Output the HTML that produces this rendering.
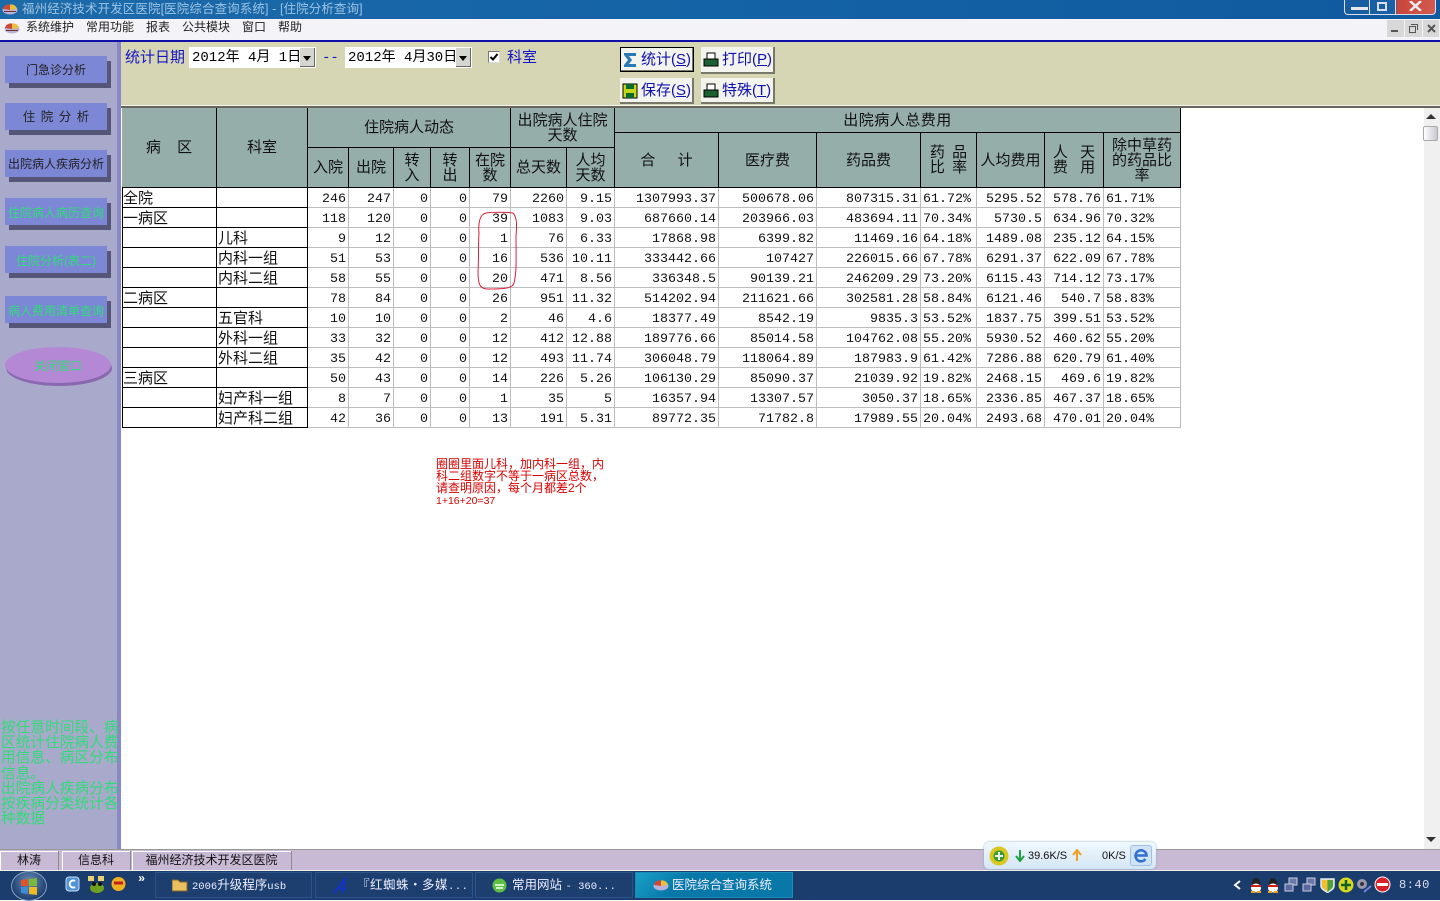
<!DOCTYPE html>
<html lang="zh"><head><meta charset="utf-8"><title>医院综合查询系统</title>
<style>
*{box-sizing:border-box}
html,body{margin:0;padding:0}
body{width:1440px;height:900px;position:relative;overflow:hidden;background:#fff;font-family:"Liberation Mono","WenQuanYi Zen Hei","Noto Sans CJK SC",monospace;font-size:14px;color:#000}
.a{position:absolute;white-space:nowrap}
.zh{font-family:"Liberation Sans","WenQuanYi Zen Hei","Noto Sans CJK SC",sans-serif}
.sb{position:absolute;left:5px;width:102px;height:27px;background:#7c88d6;box-shadow:4px 5px 0 #555578;text-align:center;line-height:29px;font-size:12px;color:#222;font-family:"Liberation Sans","WenQuanYi Zen Hei",sans-serif;white-space:nowrap}
.sb.g{color:#2fdc78;line-height:30px}
.h{position:absolute;background:#95aeaa;text-align:center;font-size:15px;line-height:15px;color:#111;display:flex;align-items:center;justify-content:center;font-family:"Liberation Sans","WenQuanYi Zen Hei",sans-serif;border-right:1px solid #000;border-bottom:1px solid #000}
table{position:absolute;left:122px;top:188px;border-collapse:separate;border-spacing:0;table-layout:fixed;width:1059px}
td{height:20px;padding:4px 2px 0 0;vertical-align:top;text-align:right;font-size:13.33px;line-height:15px;border-right:1px solid #bdbdbd;border-bottom:1px solid #bdbdbd;overflow:hidden;white-space:nowrap;color:#111}
td.k{text-align:left;padding:2px 0 0 1px;line-height:17px;font-size:15px;font-family:"Liberation Sans","WenQuanYi Zen Hei",sans-serif;border-color:#000}
td.p{text-align:left;padding:4px 0 0 2px}
.btn{position:absolute;width:74px;height:27px;background:#f4f4ee;border-right:2px solid #77776a;border-bottom:2px solid #77776a;color:#1010b0;font-size:15px;line-height:25px;white-space:nowrap;font-family:"Liberation Sans","WenQuanYi Zen Hei",sans-serif}
.btn span{position:absolute;left:21px;top:0}
.btn svg{position:absolute;left:2px;top:4px}
.tb{position:absolute;top:872px;height:26px;background:#1c3f70;border:1px solid #2d5488;color:#eef;font-size:12.5px;line-height:25px;white-space:nowrap;font-family:"Liberation Sans","WenQuanYi Zen Hei",sans-serif}
.tb i{font-style:normal;font-family:"Liberation Mono",monospace;font-size:10.5px}
.st{position:absolute;top:851px;height:19px;background:#c8b9d4;border-right:1px solid #8a8a8a;box-shadow:inset 1px 1px 0 #fff;text-align:center;font-size:12px;line-height:18px;color:#111;font-family:"Liberation Sans","WenQuanYi Zen Hei",sans-serif;white-space:nowrap}
</style></head><body>

<!-- title bar -->
<div class="a" style="left:0;top:0;width:1440px;height:19px;background:linear-gradient(90deg,#1c6aa8,#1463a6 50%,#105a9e);"></div>
<svg class="a" style="left:2px;top:2px" width="16" height="14" viewBox="0 0 16 14"><ellipse cx="8" cy="8" rx="7.5" ry="4.5" fill="#b9b2d8"/><path d="M8 8V2.5A6 5 0 0 1 15 7Z" fill="#e8c040"/><path d="M8 8V2.5A6 5 0 0 0 1 7Z" fill="#d04838"/><path d="M2 9.500h12" stroke="#7a3030"/></svg>
<div class="a zh" style="left:22px;top:1px;font-size:12.500px;line-height:17px;color:#9cc4e4;letter-spacing:.1px">福州经济技术开发区医院[医院综合查询系统] - [住院分析查询]</div>
<div class="a" style="left:1344px;top:0;width:92px;height:15px;border:1px solid #dde;border-top:0;border-radius:0 0 4px 4px;background:linear-gradient(90deg,#175da0 0,#1a60a5 51px,#c9463c 52px,#d25a4e 100%)"></div>
<div class="a" style="left:1369px;top:0;width:1px;height:15px;background:#dde"></div><div class="a" style="left:1395px;top:0;width:1px;height:15px;background:#dde"></div>
<div class="a" style="left:1351px;top:7px;width:17px;height:3px;background:#e8e8e8"></div>
<div class="a" style="left:1377px;top:2px;width:10px;height:9px;border:2px solid #dde"></div>
<svg class="a" style="left:1409px;top:1px" width="13" height="10"><path d="M1 0L12 10M12 0L1 10" stroke="#eee" stroke-width="2.500"/></svg>

<!-- menu bar -->
<div class="a" style="left:0;top:19px;width:1440px;height:21px;background:#f4f4f8"></div>
<svg class="a" style="left:4px;top:21px" width="16" height="14" viewBox="0 0 16 14"><ellipse cx="8" cy="8" rx="7.500" ry="4.500" fill="#b9b2d8"/><path d="M8 8V2.500A6 5 0 0 1 15 7Z" fill="#e8c040"/><path d="M8 8V2.500A6 5 0 0 0 1 7Z" fill="#d04838"/><path d="M2 9.500h12" stroke="#7a3030"/></svg>
<div class="a zh" style="left:26px;top:19px;font-size:12px;line-height:17px;color:#222;word-spacing:0">系统维护</div>
<div class="a zh" style="left:86px;top:19px;font-size:12px;line-height:17px;color:#222">常用功能</div>
<div class="a zh" style="left:146px;top:19px;font-size:12px;line-height:17px;color:#222">报表</div>
<div class="a zh" style="left:182px;top:19px;font-size:12px;line-height:17px;color:#222">公共模块</div>
<div class="a zh" style="left:242px;top:19px;font-size:12px;line-height:17px;color:#222">窗口</div>
<div class="a zh" style="left:278px;top:19px;font-size:12px;line-height:17px;color:#222">帮助</div>
<div class="a" style="left:1387px;top:20px;width:52px;height:17px;background:#d8d8d8"></div>
<div class="a" style="left:1387px;top:20px;width:18px;height:17px;border-right:1px solid #f4f4f4"></div>
<div class="a" style="left:1405px;top:20px;width:18px;height:17px;border-right:1px solid #f4f4f4"></div>
<div class="a" style="left:1391px;top:30px;width:7px;height:2px;background:#555"></div>
<div class="a" style="left:1409px;top:26px;width:7px;height:7px;border:1px solid #555;background:#d8d8d8"></div>
<div class="a" style="left:1411px;top:24px;width:7px;height:6px;border:1px solid #555;border-left:0;border-bottom:0"></div>
<svg class="a" style="left:1427px;top:24px" width="9" height="9"><path d="M1 1L8 8M8 1L1 8" stroke="#555" stroke-width="2"/></svg>
<div class="a" style="left:0;top:40px;width:1440px;height:2px;background:#1010a8"></div>

<!-- sidebar -->
<div class="a" style="left:0;top:42px;width:117px;height:809px;background:#a9a9cb"></div>
<div class="a" style="left:117px;top:42px;width:4px;height:809px;background:#8888c8"></div>
<div class="sb" style="top:56px">门急诊分析</div>
<div class="sb" style="top:103px;word-spacing:2px;font-size:12.500px">住 院 分 析</div>
<div class="sb" style="top:150px">出院病人疾病分析</div>
<div class="sb g" style="top:198px">住院病人病历查询</div>
<div class="sb g" style="top:246px">住院分析(表二)</div>
<div class="sb g" style="top:296px">病人费用清单查询</div>
<div class="a" style="left:6px;top:350px;width:106px;height:36px;border-radius:50%;background:#8a68b0"></div>
<div class="a zh" style="left:5px;top:347px;width:106px;height:36px;border-radius:50%;background:#b488d4;text-align:center;line-height:38px;font-size:12px;color:#2fdc78">关闭窗口</div>
<div class="a zh" style="left:1px;top:721px;width:118px;white-space:normal;font-size:14.700px;line-height:15.200px;color:#2fdc78">按任意时间段、病区统计住院病人费用信息、病区分布信息。<br>出院病人疾病分布按疾病分类统计各种数据</div>

<!-- toolbar -->
<div class="a" style="left:121px;top:42px;width:1319px;height:63px;background:#d6d6b5"></div>
<div class="a" style="left:121px;top:105px;width:1319px;height:1px;background:#f4f4ee"></div>
<div class="a" style="left:121px;top:106px;width:1319px;height:2px;background:#66665e"></div>
<div class="a zh" style="left:125px;top:49px;font-size:15px;line-height:18px;color:#1414c8">统计日期</div>
<div class="a" style="left:189px;top:47px;width:127px;height:21px;background:#fff;font-size:14px;line-height:23px;padding-left:3px">2012年 4月 1日</div>
<div class="a" style="left:300px;top:48px;width:15px;height:19px;background:#d6d6d0;border-right:1px solid #666;border-bottom:1px solid #666"></div>
<div class="a" style="left:303px;top:56px;border:4px solid transparent;border-top:5px solid #000;border-bottom:0"></div>
<div class="a" style="left:322px;top:50px;font-size:14px;line-height:17px;color:#1414c8">--</div>
<div class="a" style="left:345px;top:47px;width:127px;height:21px;background:#fff;font-size:14px;line-height:23px;padding-left:3px">2012年 4月30日</div>
<div class="a" style="left:456px;top:48px;width:15px;height:19px;background:#d6d6d0;border-right:1px solid #666;border-bottom:1px solid #666"></div>
<div class="a" style="left:459px;top:56px;border:4px solid transparent;border-top:5px solid #000;border-bottom:0"></div>
<div class="a" style="left:488px;top:51px;width:12px;height:12px;background:#fff;border:1px solid #777;border-right-color:#ddd;border-bottom-color:#ddd"></div>
<svg class="a" style="left:489px;top:52px" width="10" height="10"><path d="M1.500 5L4 7.500L8.500 2" fill="none" stroke="#000" stroke-width="2"/></svg>
<div class="a zh" style="left:507px;top:49px;font-size:15px;line-height:18px;color:#1414c8">科室</div>

<div class="btn" style="left:620px;top:47px;outline:1px solid #000;outline-offset:-1px;width:74px;height:25px"><svg width="16" height="18"><path d="M2 2H14V5H7L10 9L7 13H14V16H2V14L6 9L2 4Z" fill="#2a7ab8"/></svg><span>统计(<u>S</u>)</span></div>
<div class="btn" style="left:701px;top:47px"><svg width="16" height="18"><rect x="4" y="2" width="8" height="6" fill="#fff" stroke="#000"/><rect x="1" y="8" width="14" height="7" fill="#1a6030" stroke="#000"/></svg><span>打印(<u>P</u>)</span></div>
<div class="btn" style="left:620px;top:78px;height:26px"><svg width="16" height="18"><rect x="1" y="2" width="14" height="14" fill="#c8d818" stroke="#000"/><rect x="4" y="2" width="8" height="5" fill="#0a6a30"/><rect x="4" y="11" width="8" height="5" fill="#0a6a30"/></svg><span>保存(<u>S</u>)</span></div>
<div class="btn" style="left:701px;top:78px;height:26px"><svg width="16" height="18"><rect x="4" y="2" width="8" height="6" fill="#fff" stroke="#000"/><rect x="1" y="8" width="14" height="7" fill="#1a6030" stroke="#000"/></svg><span>特殊(<u>T</u>)</span></div>

<!-- table header -->
<div class="a" style="left:122px;top:108px;width:1059px;height:80px;background:#000"></div>
<div class="h" style="left:122px;top:108px;width:95px;height:80px;word-spacing:12px">病 区</div>
<div class="h" style="left:217px;top:108px;width:91px;height:80px">科室</div>
<div class="h" style="left:308px;top:108px;width:203px;height:40px">住院病人动态</div>
<div class="h" style="left:511px;top:108px;width:104px;height:40px">出院病人住院<br>天数</div>
<div class="h" style="left:615px;top:108px;width:566px;height:25px;letter-spacing:.5px">出院病人总费用</div>
<div class="h" style="left:308px;top:148px;width:41px;height:40px">入院</div>
<div class="h" style="left:349px;top:148px;width:45px;height:40px">出院</div>
<div class="h" style="left:394px;top:148px;width:37px;height:40px">转<br>入</div>
<div class="h" style="left:431px;top:148px;width:39px;height:40px">转<br>出</div>
<div class="h" style="left:470px;top:148px;width:41px;height:40px">在院<br>数</div>
<div class="h" style="left:511px;top:148px;width:56px;height:40px">总天数</div>
<div class="h" style="left:567px;top:148px;width:48px;height:40px">人均<br>天数</div>
<div class="h" style="left:615px;top:133px;width:104px;height:55px;word-spacing:18px">合 计</div>
<div class="h" style="left:719px;top:133px;width:98px;height:55px">医疗费</div>
<div class="h" style="left:817px;top:133px;width:104px;height:55px">药品费</div>
<div class="h" style="left:921px;top:133px;width:56px;height:55px;word-spacing:3px">药 品<br>比 率</div>
<div class="h" style="left:977px;top:133px;width:68px;height:55px">人均费用</div>
<div class="h" style="left:1045px;top:133px;width:59px;height:55px;word-spacing:8px">人 天<br>费 用</div>
<div class="h" style="left:1104px;top:133px;width:77px;height:55px">除中草药<br>的药品比<br>率</div>

<table><colgroup><col style="width:95px"><col style="width:91px"><col style="width:41px"><col style="width:45px"><col style="width:37px"><col style="width:39px"><col style="width:41px"><col style="width:56px"><col style="width:48px"><col style="width:104px"><col style="width:98px"><col style="width:104px"><col style="width:56px"><col style="width:68px"><col style="width:59px"><col style="width:77px"></colgroup>
<tr><td class="k">全院</td><td class="k"></td><td>246</td><td>247</td><td>0</td><td>0</td><td>79</td><td>2260</td><td>9.15</td><td>1307993.37</td><td>500678.06</td><td>807315.31</td><td class="p">61.72%</td><td>5295.52</td><td>578.76</td><td class="p">61.71%</td></tr>
<tr><td class="k">一病区</td><td class="k"></td><td>118</td><td>120</td><td>0</td><td>0</td><td>39</td><td>1083</td><td>9.03</td><td>687660.14</td><td>203966.03</td><td>483694.11</td><td class="p">70.34%</td><td>5730.5</td><td>634.96</td><td class="p">70.32%</td></tr>
<tr><td class="k"></td><td class="k">儿科</td><td>9</td><td>12</td><td>0</td><td>0</td><td>1</td><td>76</td><td>6.33</td><td>17868.98</td><td>6399.82</td><td>11469.16</td><td class="p">64.18%</td><td>1489.08</td><td>235.12</td><td class="p">64.15%</td></tr>
<tr><td class="k"></td><td class="k">内科一组</td><td>51</td><td>53</td><td>0</td><td>0</td><td>16</td><td>536</td><td>10.11</td><td>333442.66</td><td>107427</td><td>226015.66</td><td class="p">67.78%</td><td>6291.37</td><td>622.09</td><td class="p">67.78%</td></tr>
<tr><td class="k"></td><td class="k">内科二组</td><td>58</td><td>55</td><td>0</td><td>0</td><td>20</td><td>471</td><td>8.56</td><td>336348.5</td><td>90139.21</td><td>246209.29</td><td class="p">73.20%</td><td>6115.43</td><td>714.12</td><td class="p">73.17%</td></tr>
<tr><td class="k">二病区</td><td class="k"></td><td>78</td><td>84</td><td>0</td><td>0</td><td>26</td><td>951</td><td>11.32</td><td>514202.94</td><td>211621.66</td><td>302581.28</td><td class="p">58.84%</td><td>6121.46</td><td>540.7</td><td class="p">58.83%</td></tr>
<tr><td class="k"></td><td class="k">五官科</td><td>10</td><td>10</td><td>0</td><td>0</td><td>2</td><td>46</td><td>4.6</td><td>18377.49</td><td>8542.19</td><td>9835.3</td><td class="p">53.52%</td><td>1837.75</td><td>399.51</td><td class="p">53.52%</td></tr>
<tr><td class="k"></td><td class="k">外科一组</td><td>33</td><td>32</td><td>0</td><td>0</td><td>12</td><td>412</td><td>12.88</td><td>189776.66</td><td>85014.58</td><td>104762.08</td><td class="p">55.20%</td><td>5930.52</td><td>460.62</td><td class="p">55.20%</td></tr>
<tr><td class="k"></td><td class="k">外科二组</td><td>35</td><td>42</td><td>0</td><td>0</td><td>12</td><td>493</td><td>11.74</td><td>306048.79</td><td>118064.89</td><td>187983.9</td><td class="p">61.42%</td><td>7286.88</td><td>620.79</td><td class="p">61.40%</td></tr>
<tr><td class="k">三病区</td><td class="k"></td><td>50</td><td>43</td><td>0</td><td>0</td><td>14</td><td>226</td><td>5.26</td><td>106130.29</td><td>85090.37</td><td>21039.92</td><td class="p">19.82%</td><td>2468.15</td><td>469.6</td><td class="p">19.82%</td></tr>
<tr><td class="k"></td><td class="k">妇产科一组</td><td>8</td><td>7</td><td>0</td><td>0</td><td>1</td><td>35</td><td>5</td><td>16357.94</td><td>13307.57</td><td>3050.37</td><td class="p">18.65%</td><td>2336.85</td><td>467.37</td><td class="p">18.65%</td></tr>
<tr><td class="k"></td><td class="k">妇产科二组</td><td>42</td><td>36</td><td>0</td><td>0</td><td>13</td><td>191</td><td>5.31</td><td>89772.35</td><td>71782.8</td><td>17989.55</td><td class="p">20.04%</td><td>2493.68</td><td>470.01</td><td class="p">20.04%</td></tr>
</table>
<div class="a" style="left:122px;top:188px;width:1px;height:240px;background:#000"></div>

<!-- red circle -->
<svg class="a" style="left:470px;top:205px" width="60" height="95"><path d="M9 28C8 18 10 9 16 8C24 7 36 7 43 8C47 12 47 20 46 32C46 50 47 66 44 78C43 84 30 84 18 84C9 84 8 78 8 66C9 52 8 40 9 28Z" fill="none" stroke="#d8203c" stroke-width="1"/></svg>

<!-- note -->
<div class="a zh" style="left:436px;top:458px;font-size:12px;line-height:12px;color:#d80000;white-space:normal;width:172px">圈圈里面儿科，加内科一组，内<br>科二组数字不等于一病区总数，<br>请查明原因，每个月都差2个<br><span style="font-size:10.500px">1+16+20=37</span></div>

<!-- scrollbar -->
<div class="a" style="left:1424px;top:108px;width:16px;height:742px;background:#f0f0f0"></div>
<div class="a" style="left:1426px;top:114px;border:5px solid transparent;border-bottom:5px solid #333;border-top:0"></div>
<div class="a" style="left:1423px;top:126px;width:15px;height:15px;background:linear-gradient(90deg,#fff,#c8c8d0);border:1px solid #aaa;border-radius:2px"></div>
<div class="a" style="left:1426px;top:837px;border:5px solid transparent;border-top:5px solid #333;border-bottom:0"></div>

<!-- status bar -->
<div class="a" style="left:0;top:849px;width:1440px;height:1px;background:#999"></div>
<div class="a" style="left:0;top:850px;width:1440px;height:20px;background:#c8b9d4"></div>
<div class="st" style="left:0;width:59px">林涛</div>
<div class="st" style="left:62px;width:69px">信息科</div>
<div class="st" style="left:132px;width:160px">福州经济技术开发区医院</div>
<div class="a" style="left:0;top:870px;width:1440px;height:1px;background:#f0f0f0"></div>

<!-- taskbar -->
<div class="a" style="left:0;top:871px;width:1440px;height:29px;background:#1a3d6e"></div>
<div class="a" style="left:11px;top:871px;width:36px;height:30px;border-radius:50%;background:radial-gradient(circle at 50% 35%,#6a8cb8,#1c3e6e 75%);border:1px solid #87a0c0"></div>
<svg class="a" style="left:20px;top:878px" width="18" height="17" viewBox="0 0 18 17"><path d="M1 2L8 1V8H1Z" fill="#e2552a"/><path d="M9 1L17 0V8H9Z" fill="#7cb83a"/><path d="M1 9H8V16L1 15Z" fill="#3f8cd8"/><path d="M9 9H17V17L9 16Z" fill="#eebb22"/></svg>
<svg class="a" style="left:65px;top:876px" width="15" height="16"><rect x="1" y="1" width="13" height="14" rx="3" fill="#4f93d8" stroke="#cde"/><path d="M10 5A3.500 3.500 0 1 0 10 11" fill="none" stroke="#fff" stroke-width="2"/></svg>
<svg class="a" style="left:88px;top:876px" width="18" height="18"><rect x="0" y="0" width="6" height="5" fill="#ead070"/><rect x="10" y="0" width="6" height="5" fill="#ead070"/><ellipse cx="9" cy="12" rx="7" ry="5" fill="#70a020"/><circle cx="6" cy="8" r="2" fill="#111"/><circle cx="12" cy="8" r="2" fill="#111"/></svg>
<svg class="a" style="left:111px;top:876px" width="15" height="16"><circle cx="7.500" cy="8" r="7" fill="#f0b020"/><path d="M3 7H12" stroke="#c02020" stroke-width="3"/></svg>
<div class="a" style="left:138px;top:872px;color:#fff;font-size:12px;line-height:14px;font-weight:bold">»</div>
<div class="tb" style="left:155px;width:157px"><svg class="a" style="left:16px;top:5px" width="16" height="14"><path d="M0 2H6L8 4H15V13H0Z" fill="#e8c060" stroke="#8a6820"/></svg><span class="a" style="left:36px;top:0"><i>2006</i>升级程序<i>usb</i></span></div>
<div class="tb" style="left:315px;width:158px"><svg class="a" style="left:16px;top:3px" width="16" height="19"><path d="M2 17L13 3L11 17M6 12L14 13" fill="none" stroke="#1434c8" stroke-width="2"/></svg><span class="a" style="left:41px;top:0;letter-spacing:.5px">『红蜘蛛・多媒<i>...</i></span></div>
<div class="tb" style="left:475px;width:158px"><svg class="a" style="left:16px;top:5px" width="15" height="15"><circle cx="7.500" cy="7.500" r="7" fill="#5cc040"/><path d="M3 7H12M4 10H11" stroke="#fff" stroke-width="1.500"/></svg><span class="a" style="left:36px;top:0">常用网站 <i>- 360...</i></span></div>
<div class="tb" style="left:635px;width:158px;background:linear-gradient(135deg,#1aa0c8,#0878a8 30%,#0878a8);border-color:#1a8ab8"><svg class="a" style="left:17px;top:5px" width="16" height="14" viewBox="0 0 16 14"><ellipse cx="8" cy="8" rx="7.500" ry="4.500" fill="#b9b2d8"/><path d="M8 8V2.500A6 5 0 0 1 15 7Z" fill="#e8c040"/><path d="M8 8V2.500A6 5 0 0 0 1 7Z" fill="#d04838"/></svg><span class="a" style="left:36px;top:0">医院综合查询系统</span></div>

<!-- 360 float -->
<div class="a" style="left:984px;top:842px;width:172px;height:27px;border-radius:5px;background:linear-gradient(#f0f8ff,#d4e6f4);box-shadow:0 0 2px #8ab"></div>
<svg class="a" style="left:989px;top:846px" width="20" height="20"><circle cx="10" cy="10" r="9.500" fill="#d8c820"/><circle cx="10" cy="10" r="5.500" fill="#3a9a30"/><path d="M10 6V14M6 10H14" stroke="#eee" stroke-width="2"/></svg>
<svg class="a" style="left:1014px;top:849px" width="12" height="13"><path d="M6 1V11M2 7L6 12L10 7" fill="none" stroke="#20a040" stroke-width="2"/></svg>
<div class="a" style="left:1028px;top:849px;font-size:11px;line-height:14px;color:#111;font-family:'Liberation Sans',sans-serif">39.6K/S</div>
<svg class="a" style="left:1071px;top:849px" width="12" height="13"><path d="M6 12V2M2 6L6 1L10 6" fill="none" stroke="#f0a020" stroke-width="2"/></svg>
<div class="a" style="left:1102px;top:849px;font-size:11px;line-height:14px;color:#111;font-family:'Liberation Sans',sans-serif">0K/S</div>
<div class="a" style="left:1130px;top:845px;width:22px;height:21px;background:#cfe2f6;border:1px solid #a0c0e0;border-radius:3px"></div>
<svg class="a" style="left:1134px;top:848px" width="14" height="15"><path d="M11.500 11A5.500 5.500 0 1 1 12.500 7.500H2.500" fill="none" stroke="#3070d0" stroke-width="2.500"/></svg>

<!-- tray -->
<svg class="a" style="left:1233px;top:880px" width="9" height="10"><path d="M7 1L2 5L7 9" fill="none" stroke="#fff" stroke-width="2"/></svg>
<svg class="a" style="left:1249px;top:877px" width="14" height="16"><ellipse cx="7" cy="6" rx="4" ry="5" fill="#222"/><ellipse cx="7" cy="11" rx="5" ry="4.500" fill="#fff"/><path d="M2 8H12V10H2Z" fill="#d02018"/><path d="M2 15H6M8 15H12" stroke="#f0a020" stroke-width="2"/></svg>
<svg class="a" style="left:1266px;top:877px" width="14" height="16"><ellipse cx="7" cy="6" rx="4" ry="5" fill="#222"/><ellipse cx="7" cy="11" rx="5" ry="4.500" fill="#fff"/><path d="M2 8H12V10H2Z" fill="#d02018"/><path d="M2 15H6M8 15H12" stroke="#f0a020" stroke-width="2"/></svg>
<svg class="a" style="left:1284px;top:877px" width="14" height="16"><rect x="5" y="1" width="8" height="7" fill="#6a78a8" stroke="#ccd"/><rect x="1" y="7" width="8" height="7" fill="#5a68a0" stroke="#ccd"/></svg>
<svg class="a" style="left:1302px;top:877px" width="14" height="16"><rect x="5" y="1" width="8" height="7" fill="#6a78a8" stroke="#ccd"/><rect x="1" y="7" width="8" height="7" fill="#5a68a0" stroke="#ccd"/></svg>
<svg class="a" style="left:1320px;top:877px" width="15" height="16"><path d="M1 2H14V9C14 12 10 14 7.500 15.500C5 14 1 12 1 9Z" fill="#f0c030" stroke="#ddeeff" stroke-width="1.500"/><path d="M7.500 3V15C10 13 13 11 13 9V3Z" fill="#50a040"/></svg>
<svg class="a" style="left:1338px;top:877px" width="16" height="16"><circle cx="8" cy="8" r="7.500" fill="#d8d820"/><path d="M8 3V13M3 8H13" stroke="#106020" stroke-width="2.500"/></svg>
<svg class="a" style="left:1356px;top:877px" width="16" height="17"><circle cx="6" cy="7" r="5" fill="#99a"/><circle cx="6" cy="7" r="2" fill="#334"/><path d="M8 15L15 9" stroke="#7080d8" stroke-width="2"/></svg>
<svg class="a" style="left:1374px;top:876px" width="17" height="17"><circle cx="8.500" cy="8.500" r="7.500" fill="#d8202c" stroke="#fff"/><rect x="3" y="7" width="11" height="3" fill="#fff"/></svg>
<div class="a" style="left:1399px;top:878px;font-size:12px;line-height:15px;color:#dde;letter-spacing:.5px">8:40</div>
</body></html>
